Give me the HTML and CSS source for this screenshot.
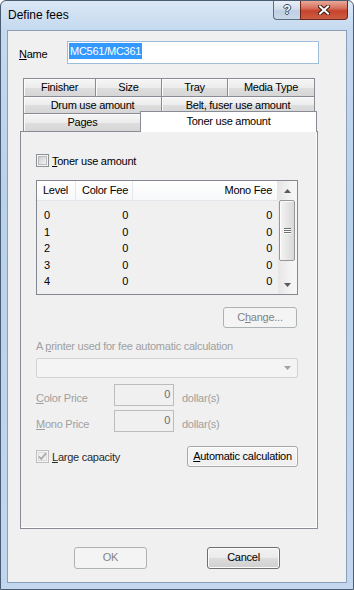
FILE: index.html
```html
<!DOCTYPE html>
<html lang="en">
<head>
    <meta charset="UTF-8">
    <meta name="viewport" content="width=device-width, initial-scale=1.0">
    <title>Define fees</title>
    <link rel="stylesheet" href="styles.css">
</head>
<body>
    <div class="window">
        <div class="titlebar">
            <span class="title">Define fees</span>
            <div class="caption-btns">
                <div class="cap help">?</div>
                <div class="cap close">
                    <svg width="12" height="10" viewBox="0 0 12 10">
                        <path d="M2 1.5 L10 8.5 M10 1.5 L2 8.5" stroke="#3a1a14" stroke-width="4" stroke-linecap="square"/>
                        <path d="M2 1.5 L10 8.5 M10 1.5 L2 8.5" stroke="#fff" stroke-width="2" stroke-linecap="square"/>
                    </svg>
                </div>
            </div>
        </div>

        <div class="client">
            <div class="name-row">
                <label class="name-label"><u>N</u>ame</label>
                <div class="textbox"><span class="sel">MC561/MC361</span></div>
            </div>

            <div class="tabs">
                <div class="tab-row row1">
                    <div class="tab w-finisher">Finisher</div>
                    <div class="tab w-size">Size</div>
                    <div class="tab w-tray">Tray</div>
                    <div class="tab w-media">Media Type</div>
                </div>
                <div class="tab-row row2">
                    <div class="tab w-drum">Drum use amount</div>
                    <div class="tab w-belt">Belt, fuser use amount</div>
                </div>
                <div class="tab-row row3">
                    <div class="tab w-pages">Pages</div>
                    <div class="tab active w-toner">Toner use amount</div>
                </div>
            </div>

            <div class="panel">
                <div class="check-row">
                    <svg class="checkbox" width="13" height="13" viewBox="0 0 13 13">
                        <defs>
                            <linearGradient id="cbg" x1="0" y1="0" x2="1" y2="1">
                                <stop offset="0" stop-color="#cbcbcb"/>
                                <stop offset="1" stop-color="#f6f6f6"/>
                            </linearGradient>
                        </defs>
                        <rect x="0.5" y="0.5" width="12" height="12" fill="#f6f6f6" stroke="#8e8f8f"/>
                        <rect x="2.5" y="2.5" width="8" height="8" fill="url(#cbg)" stroke="#b7bbc0"/>
                    </svg>
                    <span><u>T</u>oner use amount</span>
                </div>

                <div class="list">
                    <div class="list-main">
                        <div class="list-head">
                            <div class="c-level">Level</div>
                            <div class="c-color">Color Fee</div>
                            <div class="c-mono">Mono Fee</div>
                        </div>
                        <div class="list-body">
                            <div class="list-row"><span class="c-level">0</span><span class="c-color">0</span><span class="c-mono">0</span></div>
                            <div class="list-row"><span class="c-level">1</span><span class="c-color">0</span><span class="c-mono">0</span></div>
                            <div class="list-row"><span class="c-level">2</span><span class="c-color">0</span><span class="c-mono">0</span></div>
                            <div class="list-row"><span class="c-level">3</span><span class="c-color">0</span><span class="c-mono">0</span></div>
                            <div class="list-row"><span class="c-level">4</span><span class="c-color">0</span><span class="c-mono">0</span></div>
                        </div>
                    </div>
                    <div class="vscroll">
                        <div class="sb-btn">
                            <svg width="7" height="4" viewBox="0 0 7 4"><path d="M3.5 0 L7 4 L0 4 Z" fill="#5a5a5a"/></svg>
                        </div>
                        <div class="sb-track">
                            <div class="sb-thumb"><i></i><i></i><i></i></div>
                        </div>
                        <div class="sb-btn">
                            <svg width="7" height="4" viewBox="0 0 7 4"><path d="M0 0 L7 0 L3.5 4 Z" fill="#5a5a5a"/></svg>
                        </div>
                    </div>
                </div>

                <div class="change-row">
                    <div class="btn disabled w-change">C<u>h</u>ange...</div>
                </div>

                <div class="dim printer-label">A <u>p</u>rinter used for fee automatic calculation</div>
                <div class="combo">
                    <svg width="7" height="4" viewBox="0 0 7 4"><path d="M0 0 L7 0 L3.5 4 Z" fill="#a2a2a2"/></svg>
                </div>

                <div class="price-row first">
                    <span class="dim price-label"><u>C</u>olor Price</span>
                    <div class="num-box">0</div>
                    <span class="dim unit">dollar(s)</span>
                </div>
                <div class="price-row">
                    <span class="dim price-label"><u>M</u>ono Price</span>
                    <div class="num-box">0</div>
                    <span class="dim unit">dollar(s)</span>
                </div>

                <div class="large-row">
                    <div class="large-check">
                        <svg class="checkbox" width="13" height="13" viewBox="0 0 13 13">
                            <rect x="0.5" y="0.5" width="12" height="12" fill="#f4f4f4" stroke="#bfbfbf"/>
                            <rect x="2.5" y="2.5" width="8" height="8" fill="#f0f0f0" stroke="#dadada"/>
                            <path d="M3 6.5 L5.3 9 L10 3.3" fill="none" stroke="#a6a6a6" stroke-width="1.8"/>
                        </svg>
                        <span class="large-label"><u>L</u>arge capacity</span>
                    </div>
                    <div class="btn flat w-auto"><u>A</u>utomatic calculation</div>
                </div>
            </div>

            <div class="footer">
                <div class="btn disabled w-dlg">OK</div>
                <div class="btn w-dlg">Cancel</div>
            </div>
        </div>
    </div>
</body>
</html>
```

FILE: styles.css
```css
* {
    box-sizing: border-box;
}
body {
    margin: 0;
    font-family: "Liberation Sans", Arial, sans-serif;
    font-size: 11px;
    letter-spacing: -0.25px;
    color: #000;
    background: #fff;
}
u {
    text-decoration: underline;
    text-underline-offset: 1px;
}

/* window frame */
.window {
    width: 354px;
    height: 590px;
    display: flex;
    flex-direction: column;
    border: 1px solid #4a5c72;
    border-radius: 6px 6px 0 0;
    background: linear-gradient(to bottom, #dbe8f6 0, #c5d9ef 28px, #bad1eb 200px, #c2d7ee 100%);
}
.titlebar {
    height: 28px;
    flex: none;
    display: flex;
    align-items: flex-start;
    padding: 0 5px 0 7px;
}
.title {
    font-size: 12px;
    letter-spacing: 0;
    line-height: 28px;
}
.caption-btns {
    margin-left: auto;
    display: flex;
}
.cap {
    height: 19px;
    display: flex;
    align-items: center;
    justify-content: center;
    border: 1px solid #5b6d84;
    border-top: none;
}
.help {
    width: 27px;
    border-radius: 0 0 0 4px;
    border-right: none;
    background: linear-gradient(to bottom, #e9eff7 0, #d3deeb 45%, #bfcfe2 55%, #c9d7e8 100%);
    color: #fff;
    font-weight: bold;
    font-size: 12px;
    text-shadow: 1px 0 0 #34455c, -1px 0 0 #34455c, 0 1px 0 #34455c, 0 -1px 0 #34455c;
}
.close {
    width: 48px;
    border-radius: 0 0 4px 0;
    border-color: #6e251a;
    background: linear-gradient(to bottom, #e8a899 0, #d7715d 40%, #c5432c 55%, #cd5d42 100%);
}

/* client area */
.client {
    flex: 1;
    margin: 1px 6px 6px;
    border: 1px solid #8aa0ba;
    background: #f0f0f0;
}
.name-row {
    display: flex;
    align-items: center;
    padding: 10px 0 0 11px;
}
.name-label {
    width: 48px;
    padding-top: 2px;
}
.textbox {
    width: 252px;
    height: 23px;
    border: 1px solid #a0bddc;
    background: #fff;
    padding: 1px 0 0 1px;
}
.sel {
    display: inline-block;
    line-height: 16px;
    padding: 0 1px;
    background: #3399ff;
    color: #fff;
}

/* tabs */
.tabs {
    margin: 14px 0 0 15px;
}
.tab-row {
    display: flex;
    align-items: flex-start;
}
.row2, .row3 {
    margin-top: -1px;
}
.tab {
    height: 19px;
    margin-left: -1px;
    border: 1px solid #898c95;
    text-align: center;
    line-height: 17px;
    background: linear-gradient(to bottom, #f6f6f6 0, #ececec 50%, #dedede 51%, #d6d6d6 100%);
    box-shadow: inset 1px 1px 0 #fbfbfb;
}
.tab:first-child {
    margin-left: 0;
}
.row2 .tab {
    height: 18px;
    line-height: 16px;
}
.tab.active {
    position: relative;
    z-index: 1;
    height: 21px;
    margin-top: -2px;
    margin-left: -2px;
    border-bottom: none;
    background: #fff;
    box-shadow: none;
    line-height: 18px;
}
.w-finisher { width: 73px; }
.w-size { width: 67px; }
.w-tray { width: 67px; }
.w-media { width: 88px; }
.w-drum { width: 139px; }
.w-belt { width: 154px; }
.w-pages { width: 119px; }
.w-toner { width: 177px; }

/* tab page */
.panel {
    width: 298px;
    height: 398px;
    margin: -1px 0 0 12px;
    border: 1px solid #898c95;
    box-shadow: inset -1px -1px 0 #fff;
    padding: 22px 19px 0 15px;
}
.check-row {
    display: flex;
    align-items: center;
    height: 13px;
}
.checkbox {
    display: block;
    flex: none;
}
.check-row span {
    margin-left: 3px;
    padding-top: 1px;
}

/* list view */
.list {
    display: flex;
    height: 115px;
    margin-top: 13px;
    border: 1px solid #828790;
    background: #f0f0f0;
}
.list-main {
    width: 241px;
}
.list-head {
    display: flex;
    height: 20px;
    line-height: 19px;
    background: linear-gradient(to bottom, #ffffff 0, #f7f8f9 100%);
    border-bottom: 1px solid #e2e5ea;
}
.list-head div {
    border-right: 1px solid #e3e6ea;
}
.list-head .c-level { width: 39px; padding-left: 6px; }
.list-head .c-color { width: 57px; padding-left: 6px; }
.list-head .c-mono { width: 145px; text-align: right; padding-right: 5px; }
.list-body {
    padding-top: 6px;
}
.list-row {
    display: flex;
    height: 16.5px;
    line-height: 16px;
}
.list-row .c-level { width: 39px; padding-left: 7px; }
.list-row .c-color { width: 57px; text-align: right; padding-right: 5px; }
.list-row .c-mono { width: 145px; text-align: right; padding-right: 6px; }

.vscroll {
    width: 19px;
    display: flex;
    flex-direction: column;
    background: linear-gradient(to right, #e6e6e6 0, #f2f2f2 60%, #f7f7f7 100%);
}
.sb-btn {
    height: 19px;
    display: flex;
    align-items: center;
    justify-content: center;
}
.sb-track {
    flex: 1;
}
.sb-thumb {
    height: 61px;
    margin: 0 2px 0 1px;
    border: 1px solid #979797;
    border-radius: 2px;
    background: linear-gradient(to right, #f4f4f4 0, #e6e6e6 50%, #d9d9d9 100%);
    box-shadow: inset 1px 1px 0 #fbfbfb;
    display: flex;
    flex-direction: column;
    align-items: center;
    justify-content: center;
    gap: 1px;
}
.sb-thumb i {
    display: block;
    width: 7px;
    height: 1px;
    background: #6f6f6f;
    box-shadow: 0 1px 0 #fff;
}

/* buttons */
.btn {
    height: 22px;
    border: 1px solid #707070;
    border-radius: 3px;
    text-align: center;
    line-height: 19px;
    background: linear-gradient(to bottom, #f2f2f2 0, #ebebeb 50%, #dddddd 51%, #cfcfcf 100%);
    box-shadow: inset 0 0 0 1px #fbfbfb;
}
.btn.disabled {
    border-color: #adb2b5;
    background: #f4f4f4;
    box-shadow: none;
    color: #838383;
}
.btn.flat {
    border-color: #a7a7a7;
    background: linear-gradient(to bottom, #f6f6f6 0, #eeeeee 100%);
    box-shadow: inset 0 0 0 1px #fbfbfb;
}
.change-row {
    display: flex;
    justify-content: flex-end;
    margin-top: 12px;
}
.w-change {
    width: 74px;
    height: 21px;
    margin-right: 1px;
}

.dim {
    color: #a0a0a0;
}
.printer-label {
    margin-top: 12px;
    line-height: 13px;
}
.combo {
    height: 20px;
    margin-top: 5px;
    border: 1px solid #d3d3d3;
    border-radius: 2px;
    background: #f4f4f4;
    display: flex;
    align-items: center;
    justify-content: flex-end;
    padding-right: 6px;
}

.price-row {
    display: flex;
    align-items: center;
    margin-top: 4px;
}
.price-row.first {
    margin-top: 6px;
}
.price-label {
    width: 78px;
    padding-top: 5px;
}
.num-box {
    width: 60px;
    height: 22px;
    border: 1px solid #bcbcbc;
    background: #f0f0f0;
    color: #6d6d6d;
    text-align: right;
    padding: 3px 3px 0 0;
    line-height: 13px;
}
.unit {
    margin-left: 8px;
    padding-top: 5px;
}

.large-row {
    display: flex;
    align-items: center;
    justify-content: space-between;
    margin-top: 14px;
}
.large-check {
    display: flex;
    align-items: center;
}
.large-label {
    margin-left: 3px;
    padding-top: 1px;
    color: #2a2a2a;
}
.w-auto {
    width: 111px;
    height: 21px;
}

.footer {
    display: flex;
    gap: 60px;
    margin: 18px 0 0 66px;
}
.w-dlg {
    width: 73px;
}
```
